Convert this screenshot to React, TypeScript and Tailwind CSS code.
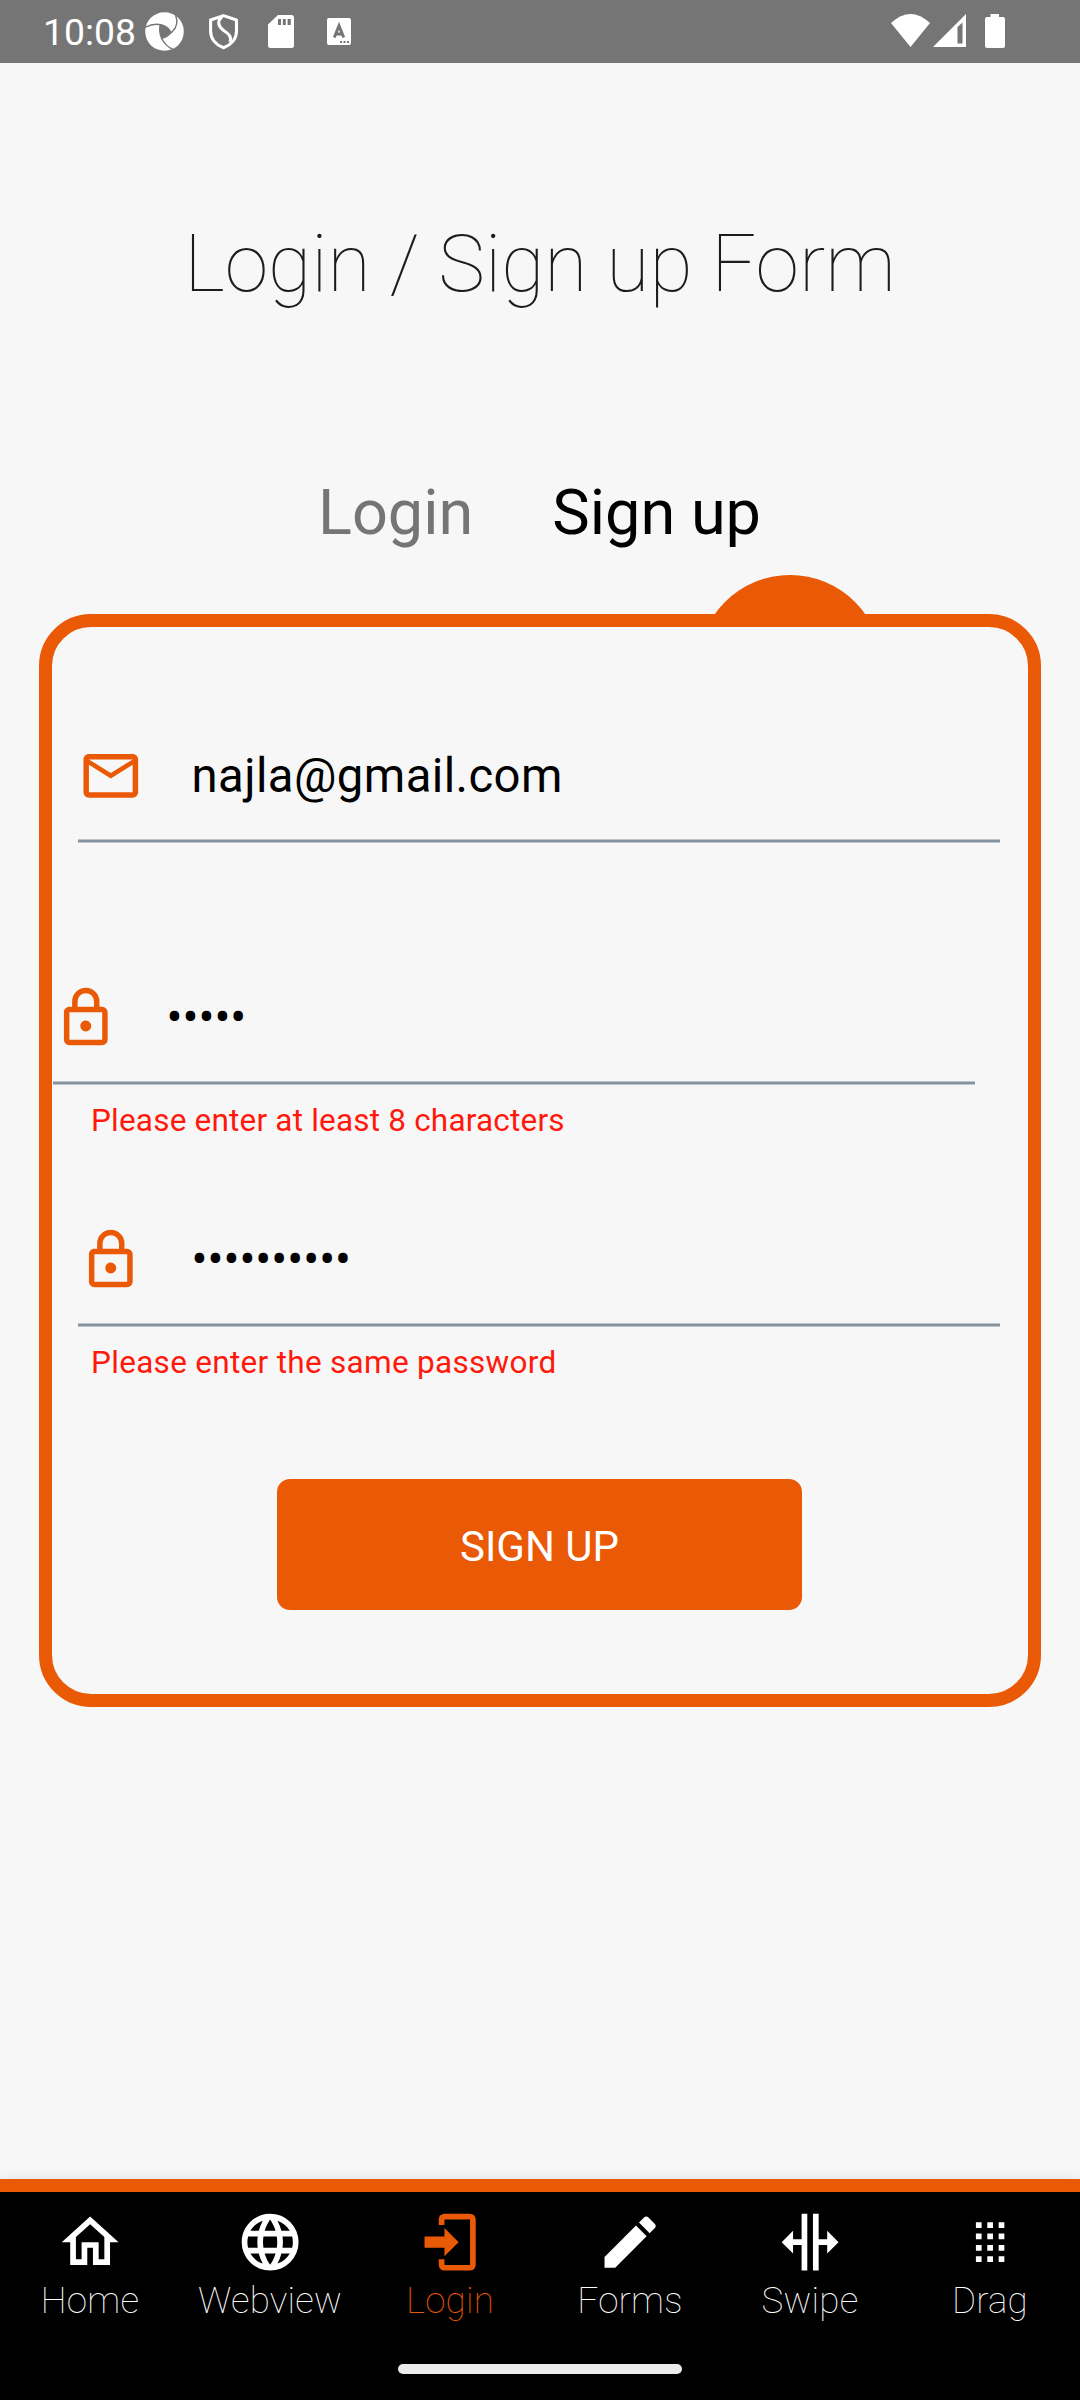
import type { ReactNode } from 'react';

const paths = {
  mail: 'M22 6C22 4.9 21.1 4 20 4H4C2.9 4 2 4.9 2 6V18C2 19.1 2.9 20 4 20H20C21.1 20 22 19.1 22 18V6M20 6L12 11L4 6H20M20 18H4V8L12 13L20 8V18Z',
  lock: 'M12,17C10.89,17 10,16.1 10,15C10,13.89 10.89,13 12,13A2,2 0 0,1 14,15A2,2 0 0,1 12,17M18,20V10H6V20H18M18,8A2,2 0 0,1 20,10V20A2,2 0 0,1 18,22H6C4.89,22 4,21.1 4,20V10C4,8.89 4.89,8 6,8H7V6A5,5 0 0,1 12,1A5,5 0 0,1 17,6V8H18M12,3A3,3 0 0,0 9,6V8H15V6A3,3 0 0,0 12,3Z',
  home: 'M12 5.69L17 10.19V18H15V12H9V18H7V10.19L12 5.69M12 3L2 12H5V20H11V14H13V20H19V12H22L12 3Z',
  web: 'M16.36,14C16.44,13.34 16.5,12.68 16.5,12C16.5,11.32 16.44,10.66 16.36,10H19.74C19.9,10.64 20,11.31 20,12C20,12.69 19.9,13.36 19.74,14M14.59,19.56C15.19,18.45 15.65,17.25 15.97,16H18.92C17.96,17.65 16.43,18.93 14.59,19.56M14.34,14H9.66C9.56,13.34 9.5,12.68 9.5,12C9.5,11.32 9.56,10.65 9.66,10H14.34C14.43,10.65 14.5,11.32 14.5,12C14.5,12.68 14.43,13.34 14.34,14M12,19.96C11.17,18.76 10.5,17.43 10.09,16H13.91C13.5,17.43 12.83,18.76 12,19.96M8,8H5.08C6.03,6.34 7.57,5.06 9.4,4.44C8.8,5.55 8.35,6.75 8,8M5.08,16H8C8.35,17.25 8.8,18.45 9.4,19.56C7.57,18.93 6.03,17.65 5.08,16M4.26,14C4.1,13.36 4,12.69 4,12C4,11.31 4.1,10.64 4.26,10H7.64C7.56,10.66 7.5,11.32 7.5,12C7.5,12.68 7.56,13.34 7.64,14M12,4.03C12.83,5.23 13.5,6.57 13.91,8H10.09C10.5,6.57 11.17,5.23 12,4.03M18.92,8H15.97C15.65,6.75 15.19,5.55 14.59,4.44C16.43,5.07 17.96,6.34 18.92,8M12,2C6.47,2 2,6.5 2,12A10,10 0 0,0 12,22A10,10 0 0,0 22,12A10,10 0 0,0 12,2Z',
  login:
    'M10,17V14H3V10H10V7L15,12L10,17M10,2H19A2,2 0 0,1 21,4V20A2,2 0 0,1 19,22H10A2,2 0 0,1 8,20V18H10V20H19V4H10V6H8V4A2,2 0 0,1 10,2Z',
  pencil:
    'M20.71,7.04C21.1,6.65 21.1,6 20.71,5.63L18.37,3.29C18,2.9 17.35,2.9 16.96,3.29L15.12,5.12L18.87,8.87M3,17.25V21H6.75L17.81,9.93L14.06,6.18L3,17.25Z',
  swipe:
    'M18,16V13H15V22H13V2H15V11H18V8L22,12L18,16M2,12L6,16V13H9V22H11V2H9V11H6V8L2,12Z',
  drag: 'M7,19V17H9V19H7M11,19V17H13V19H11M15,19V17H17V19H15M7,15V13H9V15H7M11,15V13H13V15H11M15,15V13H17V15H15M7,11V9H9V11H7M11,11V9H13V11H11M15,11V9H17V11H15M7,7V5H9V7H7M11,7V5H13V7H11M15,7V5H17V7H15Z',
};

type IconName = keyof typeof paths;

function Icon({ name, className }: { name: IconName; className: string }) {
  return (
    <svg viewBox="0 0 24 24" fill="currentColor" className={`block shrink-0 ${className}`}>
      <path d={paths[name]} />
    </svg>
  );
}

function StatusBar() {
  return (
    <header className="flex h-[63px] items-start bg-[#757575] pl-[43px] text-white">
      <span className="mt-[9.5px] w-[102px] text-[37.3px] leading-[44px] whitespace-nowrap">10:08</span>
      <svg viewBox="0 0 40 40" className="mt-3 size-10 shrink-0">
        <circle cx="19.5" cy="19.5" r="19.3" fill="#fff" />
        <path d="M15 12.500Q22 14 26 20Q22 24.500 17 26.500Q13.500 19 15 12.500Z" fill="#757575" />
        <g fill="none" stroke="#757575" strokeWidth="1.4">
          <path d="M0 15.500Q8 11 16 12.800Q23 14.500 26.500 21" />
          <path d="M30.500 3Q34.500 13 27 20Q23 24.500 16.500 26.700" />
          <path d="M29 38Q20 34 16.500 26Q13.500 19 15.500 12" />
        </g>
      </svg>
      <svg viewBox="0 0 30 36" className="mt-[14px] ml-6 h-9 w-[30px] shrink-0" fill="none" stroke="#fff" strokeWidth="3.100">
        <path d="M14.500 1.600L27.500 6V17C27.500 25 22 31 14.500 33.800C7 31 1.600 25 1.600 17V6Z" strokeLinejoin="round" />
        <path d="M13 2.500C8 7 9 12 14 16C20 20 23 23 21 28" />
      </svg>
      <svg viewBox="0 0 26 33" className="mt-[15px] ml-[29px] h-[33px] w-[26px] shrink-0">
        <path d="M10 0H23.500Q26 0 26 2.500V30.500Q26 33 23.500 33H2.500Q0 33 0 30.500V9.500Z" fill="#fff" />
        <path d="M10 4H13V10H10ZM14.800 4H17.800V10H14.800ZM19.600 4H22.800V10H19.600Z" fill="#757575" />
      </svg>
      <svg viewBox="0 0 24 27" className="mt-[18px] ml-[33px] h-[27px] w-6 shrink-0">
        <rect width="24" height="27" rx="2" fill="#fff" />
        <path d="M7.300 19.500L12 7.800L16.700 19.500M9 16H15" fill="none" stroke="#757575" strokeWidth="3" />
        <path d="M13 23H15V25H13ZM16.500 23H18.500V25H16.500ZM20 23H22V25H20Z" fill="#757575" />
      </svg>
      <svg viewBox="0 0 40 33" className="mt-[14px] ml-[540px] h-[33px] w-10 shrink-0" fill="#fff">
        <path d="M0 9Q19.500 -9 39 9L19.500 33Z" />
      </svg>
      <svg viewBox="0 0 33 33" className="mt-[14px] ml-[2px] size-[33px] shrink-0">
        <path d="M33 0V33H0Z" fill="#fff" />
        <path d="M24.500 13L29.500 8.500V29.500H24.500Z" fill="#757575" />
      </svg>
      <svg viewBox="0 0 20 34" className="mt-[14px] ml-[19px] h-[34px] w-5 shrink-0" fill="#fff">
        <path d="M5.500 0H14V3H18Q20 3 20 5V32Q20 34 18 34H2Q0 34 0 32V5Q0 3 2 3H5.500Z" />
      </svg>
    </header>
  );
}

function Field({ icon, shifted = false, children }: { icon: IconName; shifted?: boolean; children: ReactNode }) {
  return (
    <div
      className={`flex h-[131px] w-[922px] flex-col text-[47.25px] leading-[60px] text-black ${shifted ? 'ml-px' : 'ml-[26px]'}`}
    >
      <div className="flex h-[127px] items-center">
        <Icon name={icon} className="size-[65.6px] text-[#ea5906]" />
        <span className="ml-[48px]">{children}</span>
      </div>
      <div className="h-1 border-y border-[#bcc4ca] bg-[#86939e]" />
    </div>
  );
}

const tabs: { icon: IconName; label: string }[] = [
  { icon: 'home', label: 'Home' },
  { icon: 'web', label: 'Webview' },
  { icon: 'login', label: 'Login' },
  { icon: 'pencil', label: 'Forms' },
  { icon: 'swipe', label: 'Swipe' },
  { icon: 'drag', label: 'Drag' },
];

export default function App() {
  return (
    <div className="flex h-[2400px] w-[1080px] flex-col overflow-hidden bg-[#f7f7f7] font-[Roboto,sans-serif]">
      <StatusBar />
      <main className="flex-1">
        <h1 className="pt-[155px] text-center text-[78.75px] leading-[92px] font-thin text-[#1c1b1f]">Login / Sign up Form</h1>
        <div className="mt-[166px] flex h-[138px] gap-[79px] pl-[318px] text-[63px] leading-[74px]">
          <span className="text-[#757575]">Login</span>
          <span className="text-black">Sign up</span>
        </div>
        <section className="relative mx-[39px] h-[1093px]">
          <div className="absolute top-[-39px] left-[659px] size-[184px] rounded-full bg-[#ea5906]" />
          <div className="relative h-full rounded-[52px] border-[13px] border-[#ea5906] bg-[#f7f7f7] pt-[85px]">
            <Field icon="mail">
              <span className="tracking-[0.42px]">najla@gmail.com</span>
            </Field>
            <div className="h-[111px]" />
            <Field icon="lock" shifted>•••••</Field>
            <p className="h-[111px] pt-[17px] pl-[39px] text-[31.5px] leading-[37px] tracking-[0.2px] text-[#ff190c]">Please enter at least 8 characters</p>
            <Field icon="lock">••••••••••</Field>
            <p className="pt-[17px] pl-[39px] text-[31.5px] leading-[37px] tracking-[0.3px] text-[#ff190c]">Please enter the same password</p>
            <button className="mt-[98px] ml-[225px] block h-[131px] w-[525px] rounded-[13px] bg-[#ea5906] pt-1 text-[42px] text-white">SIGN UP</button>
          </div>
        </section>
      </main>
      <nav className="h-[221px] border-t-[13px] border-[#ea5906] bg-black shadow-[0_0_12px_rgba(0,0,0,0.1)]">
        <div className="grid h-[172px] grid-cols-6 pt-4">
          {tabs.map(({ icon, label }) => (
            <div key={label} className={`flex flex-col items-center ${label === 'Login' ? 'text-[#ea5906]' : 'text-white'}`}>
              <Icon name={icon} className="size-[68.25px]" />
              <span className="mt-[3px] text-[36.75px] leading-[44px] font-thin tracking-[0.2px]">{label}</span>
            </div>
          ))}
        </div>
        <div className="mx-auto h-[10px] w-[284px] rounded-full bg-[#ececec]" />
      </nav>
    </div>
  );
}
